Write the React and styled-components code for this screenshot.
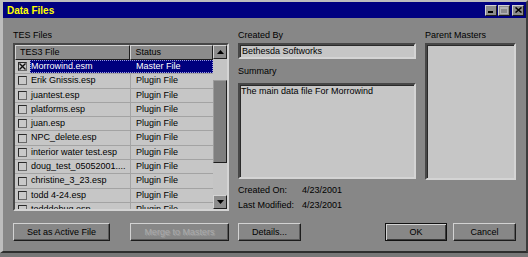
import React from "react";
import styled, { createGlobalStyle } from "styled-components";

const FONT = `"Liberation Sans", Arial, sans-serif`;

const Global = createGlobalStyle`
  html, body { margin: 0; padding: 0; background: #777; }
  body { width: 528px; height: 257px; overflow: hidden; font-family: ${FONT}; }
`;

const Window = styled.div`
  box-sizing: border-box;
  width: 528px;
  height: 253px;
  background: #878787;
  border-top: 2px solid #bdbdbd;
  border-left: 3px solid #bdbdbd;
  border-right: 2px solid #3c3c3c;
  border-bottom: 2px solid #2e2e2e;
  display: flex;
  flex-direction: column;
`;

const TitleBar = styled.div`
  height: 16px;
  background: #000080;
  display: flex;
  align-items: center;
  padding: 0 2px;
`;

const Title = styled.span`
  flex: 1;
  color: #ffff00;
  font: bold 10px ${FONT};
  padding-left: 2px;
`;

const CaptionButton = styled.div`
  box-sizing: border-box;
  width: 12px;
  height: 11px;
  margin-left: ${(p) => p.$gap || 0}px;
  background: #8c8c8c;
  border: 1px solid;
  border-color: #d2d2d2 #1e1e1e #1e1e1e #d2d2d2;
  display: flex;
  align-items: center;
  justify-content: center;
`;

const Body = styled.div`
  flex: 1;
  padding: 12px 10px 0 10px;
  display: flex;
  flex-direction: column;
`;

const Columns = styled.div`
  display: grid;
  grid-template-columns: 216px 178px 91px;
  column-gap: 9px;
  height: 183px;
  align-items: start;
`;

const Column = styled.div`
  display: flex;
  flex-direction: column;
`;

const Label = styled.div`
  font-size: 9px;
  line-height: 11px;
  height: 11px;
  color: #000;
  margin-top: ${(p) => p.$top || 0}px;
  margin-bottom: ${(p) => p.$bottom ?? 2}px;
  white-space: nowrap;
`;

const Sunken = styled.div`
  box-sizing: border-box;
  height: ${(p) => p.$h}px;
  background: #c6c6c6;
  border: 2px solid;
  border-color: #474747 #d4d4d4 #d4d4d4 #474747;
  box-shadow: inset 1px 1px 0 #2a2a2a;
  font-size: 9px;
  line-height: 11px;
  color: #000;
  padding: ${(p) => p.$pad || "0"};
  overflow: hidden;
`;

const ListBox = styled(Sunken)`
  display: flex;
  box-shadow: none;
  padding: 0;
`;

const Table = styled.div`
  width: 199px;
  overflow: hidden;
  display: flex;
  flex-direction: column;
`;

const Header = styled.div`
  display: flex;
  height: 15px;
  flex: none;
`;

const HeaderCell = styled.div`
  box-sizing: border-box;
  width: ${(p) => p.$w}px;
  height: 15px;
  background: #8c8c8c;
  border: 1px solid;
  border-color: #d4d4d4 #1e1e1e #1e1e1e #d4d4d4;
  padding-left: 4px;
  font-size: 9px;
  line-height: 13px;
  color: #000;
`;

const Row = styled.div`
  box-sizing: border-box;
  display: flex;
  height: 14.3px;
  flex: none;
  border-bottom: 1px solid #a3a3a3;
  font-size: 9px;
  line-height: 13px;
`;

const CheckCell = styled.div`
  width: 15px;
  flex: none;
  display: flex;
  align-items: center;
  padding-left: 3px;
  box-sizing: border-box;
`;

const CheckBox = styled.div`
  box-sizing: border-box;
  width: 9px;
  height: 9px;
  border: 1px solid;
  border-color: #2a2a2a #6a6a6a #6a6a6a #2a2a2a;
  background: #c9c9c9;
  display: flex;
`;

const Selection = styled.div`
  flex: 1;
  display: flex;
  background: ${(p) => (p.$on ? "#00007e" : "transparent")};
  color: ${(p) => (p.$on ? "#fff" : "#000")};
  outline: ${(p) => (p.$on ? "1px dotted #9a9ae0" : "none")};
  outline-offset: -1px;
`;

const NameCell = styled.div`
  width: 101px;
  box-sizing: border-box;
  padding-left: 1px;
  border-right: 1px solid ${(p) => (p.$on ? "#00007e" : "#a3a3a3")};
  white-space: nowrap;
  overflow: hidden;
`;

const StatusCell = styled.div`
  flex: 1;
  padding-left: 5px;
  white-space: nowrap;
`;

const ScrollBar = styled.div`
  width: 14px;
  display: flex;
  flex-direction: column;
`;

const ArrowButton = styled.div`
  box-sizing: border-box;
  height: 14px;
  flex: none;
  background: #8c8c8c;
  border: 1px solid;
  border-color: #d4d4d4 #1e1e1e #1e1e1e #d4d4d4;
  display: flex;
  align-items: center;
  justify-content: center;
`;

const Track = styled.div`
  flex: 1;
  background: #c4c4c4;
  padding-top: 21px;
  box-sizing: border-box;
`;

const Thumb = styled.div`
  box-sizing: border-box;
  height: 83px;
  background: #7f7f7f;
  border: 1px solid;
  border-color: #9c9c9c #1e1e1e #1e1e1e #9c9c9c;
`;

const InfoRow = styled.div`
  display: grid;
  grid-template-columns: 64px auto;
  height: 15px;
  align-items: center;
  font-size: 9px;
  color: #000;
  margin-top: ${(p) => p.$top || 0}px;
  white-space: nowrap;
`;

const ButtonRow = styled.div`
  display: flex;
  margin-top: 10px;
`;

const Button = styled.div`
  box-sizing: border-box;
  width: ${(p) => p.$w}px;
  height: 18px;
  margin-left: ${(p) => p.$ml || 0}px;
  background: #878787;
  border: 1px solid;
  border-color: ${(p) => (p.$def ? "#111" : "#d2d2d2 #1c1c1c #1c1c1c #d2d2d2")};
  box-shadow: ${(p) =>
    p.$def
      ? "inset 1px 1px 0 #d2d2d2, inset -1px -1px 0 #3a3a3a"
      : "inset -1px -1px 0 #5a5a5a"};
  display: flex;
  align-items: center;
  justify-content: center;
  font-size: 9px;
  color: ${(p) => (p.$disabled ? "#ababab" : "#000")};
  text-shadow: ${(p) => (p.$disabled ? "1px 1px 0 #9a9a9a" : "none")};
  white-space: nowrap;
`;

const Spacer = styled.div`
  flex: 1;
`;

const files = [
  ["Morrowind.esm", "Master File"],
  ["Erik Gnissis.esp", "Plugin File"],
  ["juantest.esp", "Plugin File"],
  ["platforms.esp", "Plugin File"],
  ["juan.esp", "Plugin File"],
  ["NPC_delete.esp", "Plugin File"],
  ["interior water test.esp", "Plugin File"],
  ["doug_test_05052001....", "Plugin File"],
  ["christine_3_23.esp", "Plugin File"],
  ["todd 4-24.esp", "Plugin File"],
  ["todddebug.esp", "Plugin File"],
];

const XMark = () => (
  <svg width="7" height="7" viewBox="0 0 7 7">
    <path d="M0.5 0.5 L6.5 6.5 M6.5 0.5 L0.5 6.5" stroke="#111" strokeWidth="1.4" />
  </svg>
);

const Tri = ({ up }) => (
  <svg width="7" height="4" viewBox="0 0 7 4">
    <path d={up ? "M3.5 0 L7 4 L0 4 Z" : "M0 0 L7 0 L3.5 4 Z"} fill="#000" />
  </svg>
);

export default function App() {
  return (
    <>
      <Global />
      <Window>
        <TitleBar>
          <Title>Data Files</Title>
          <CaptionButton>
            <svg width="6" height="6" viewBox="0 0 6 6">
              <rect x="0" y="4" width="5" height="2" fill="#000" />
            </svg>
          </CaptionButton>
          <CaptionButton $gap={1}>
            <svg width="8" height="7" viewBox="0 0 8 7">
              <rect x="0.5" y="0.5" width="7" height="6" fill="none" stroke="#b4b4b4" />
              <rect x="0.5" y="0.5" width="7" height="1.5" fill="#b4b4b4" />
            </svg>
          </CaptionButton>
          <CaptionButton $gap={2}>
            <svg width="7" height="6" viewBox="0 0 7 6">
              <path d="M0.5 0.5 L6.5 5.5 M6.5 0.5 L0.5 5.5" stroke="#000" strokeWidth="1.5" />
            </svg>
          </CaptionButton>
        </TitleBar>
        <Body>
          <Columns>
            <Column>
              <Label>TES Files</Label>
              <ListBox $h={168}>
                <Table>
                  <Header>
                    <HeaderCell $w={116}>TES3 File</HeaderCell>
                    <HeaderCell $w={83}>Status</HeaderCell>
                  </Header>
                  {files.map(([name, status], i) => (
                    <Row key={name}>
                      <CheckCell>
                        <CheckBox>{i === 0 && <XMark />}</CheckBox>
                      </CheckCell>
                      <Selection $on={i === 0}>
                        <NameCell $on={i === 0}>{name}</NameCell>
                        <StatusCell>{status}</StatusCell>
                      </Selection>
                    </Row>
                  ))}
                </Table>
                <ScrollBar>
                  <ArrowButton>
                    <Tri up />
                  </ArrowButton>
                  <Track>
                    <Thumb />
                  </Track>
                  <ArrowButton>
                    <Tri />
                  </ArrowButton>
                </ScrollBar>
              </ListBox>
            </Column>
            <Column>
              <Label>Created By</Label>
              <Sunken $h={16} $pad="1px 2px">Bethesda Softworks</Sunken>
              <Label $top={7} $bottom={6}>Summary</Label>
              <Sunken $h={96} $pad="1px 1px">The main data file For Morrowind</Sunken>
              <InfoRow $top={3}>
                <span>Created On:</span>
                <span>4/23/2001</span>
              </InfoRow>
              <InfoRow>
                <span>Last Modified:</span>
                <span>4/23/2001</span>
              </InfoRow>
            </Column>
            <Column>
              <Label>Parent Masters</Label>
              <Sunken $h={137} />
            </Column>
          </Columns>
          <ButtonRow>
            <Button $w={97}>Set as Active File</Button>
            <Button $w={99} $ml={20} $disabled>
              Merge to Masters
            </Button>
            <Button $w={63} $ml={9}>Details...</Button>
            <Spacer />
            <Button $w={62} $def>OK</Button>
            <Button $w={63} $ml={6}>Cancel</Button>
          </ButtonRow>
        </Body>
      </Window>
    </>
  );
}
